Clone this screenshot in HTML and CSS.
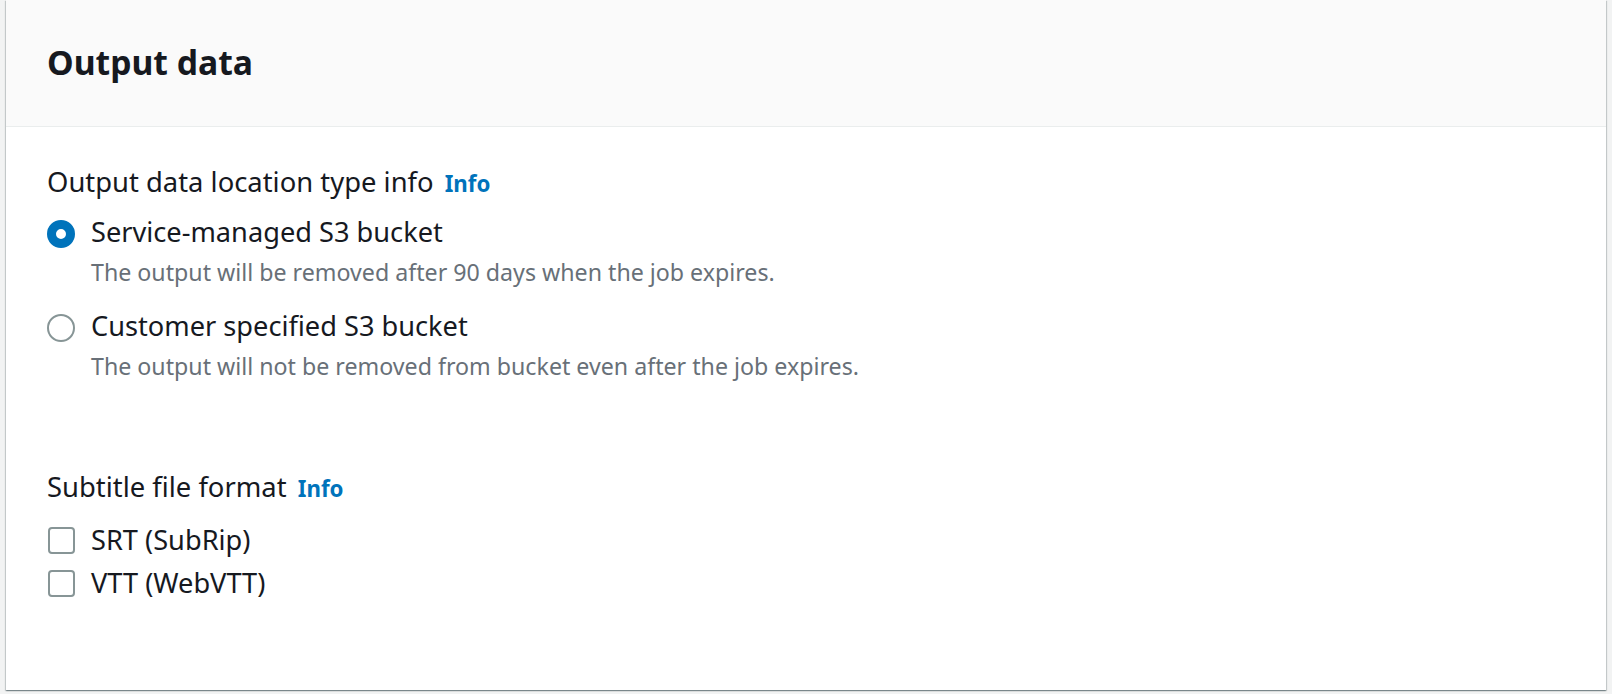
FILE: index.html
```html
<!DOCTYPE html>
<html lang="en">
<head>
<meta charset="utf-8">
<title>Output data</title>
<link rel="stylesheet" href="styles.css">
</head>
<body>
<div class="page">
  <section class="card">
    <header class="card-header">
      <h2 class="card-title">Output data</h2>
    </header>
    <div class="card-body">
      <div class="field">
        <div class="field-label">Output data location type info <a class="info" href="#">Info</a></div>
        <div class="options">
          <label class="radio-option">
            <span class="radio checked"></span>
            <span class="option-text">
              <span class="option-title">Service-managed S3 bucket</span>
              <span class="option-desc">The output will be removed after 90 days when the job expires.</span>
            </span>
          </label>
          <label class="radio-option second">
            <span class="radio"></span>
            <span class="option-text">
              <span class="option-title">Customer specified S3 bucket</span>
              <span class="option-desc">The output will not be removed from bucket even after the job expires.</span>
            </span>
          </label>
        </div>
      </div>
      <div class="field field-subtitle">
        <div class="field-label">Subtitle file format <a class="info" href="#">Info</a></div>
        <div class="checks">
          <label class="check-option"><span class="checkbox"></span><span class="option-title">SRT (SubRip)</span></label>
          <label class="check-option"><span class="checkbox"></span><span class="option-title">VTT (WebVTT)</span></label>
        </div>
      </div>
    </div>
  </section>
</div>
</body>
</html>
```

FILE: styles.css
```css
html, body {
  margin: 0;
  padding: 0;
}
body {
  background: #f2f3f3;
  font-family: "Noto Sans", "Open Sans", "Liberation Sans", sans-serif;
  color: #16191f;
}
.page {
  padding: 0 6px 6px 6px;
}
.card {
  background: #ffffff;
  box-shadow: 0 1px 1px 0 rgba(0, 28, 36, 0.3), 1px 1px 1px 0 rgba(0, 28, 36, 0.15), -1px 1px 1px 0 rgba(0, 28, 36, 0.15);
}
.card-header {
  box-sizing: border-box;
  height: 127px;
  padding: 42px 41px 0 41px;
  background: #fafafa;
  border-bottom: 1px solid #eaeded;
}
.card-title {
  margin: 0;
  font-size: 33.7px;
  line-height: 40px;
  font-weight: 700;
  color: #16191f;
}
.card-body {
  padding: 37px 41px 89px 41px;
}
.field-label {
  height: 36px;
  font-size: 27.4px;
  line-height: 36px;
  color: #16191f;
}
.info {
  font-size: 22.3px;
  line-height: 1;
  font-weight: 700;
  color: #0073bb;
  text-decoration: none;
  margin-left: 4px;
}
.options {
  display: flex;
  flex-direction: column;
  gap: 21px;
  margin-top: 14px;
}
.radio-option, .check-option {
  display: flex;
  align-items: flex-start;
  gap: 16px;
}
.option-text {
  display: flex;
  flex-direction: column;
  gap: 7px;
}
.option-title {
  font-size: 27.2px;
  line-height: 36px;
  color: #16191f;
}
.option-desc {
  font-size: 23.2px;
  line-height: 30px;
  color: #687078;
}
.radio {
  box-sizing: border-box;
  flex: none;
  width: 28px;
  height: 28px;
  margin-top: 6px;
  border-radius: 50%;
  border: 2px solid #879596;
  background: #ffffff;
}
.radio.checked {
  border: 9px solid #0073bb;
  background: #ffffff;
}
.field-subtitle {
  margin-top: 88px;
}
.checks {
  display: flex;
  flex-direction: column;
  gap: 7px;
  margin-top: 17px;
}
.checkbox {
  box-sizing: border-box;
  flex: none;
  width: 27px;
  height: 27px;
  margin-top: 5px;
  margin-left: 1px;
  border: 2px solid #879596;
  border-radius: 4px;
  background: #ffffff;
}
```
